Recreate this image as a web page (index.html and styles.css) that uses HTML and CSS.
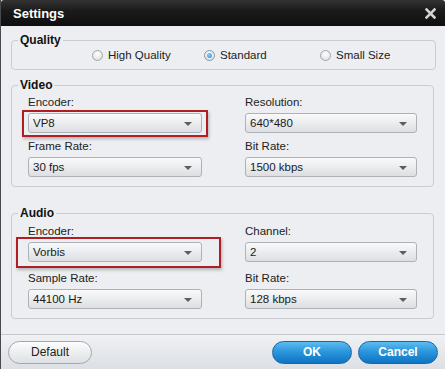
FILE: index.html
```
<!DOCTYPE html>
<html lang="en">
<head>
    <meta charset="UTF-8">
    <meta name="viewport" content="width=device-width, initial-scale=1.0">
    <title>Settings</title>
    <link rel="stylesheet" href="styles.css">
</head>
<body>

<div class="window">
    <div class="titlebar">
        <span class="title">Settings</span>
        <button class="close" aria-label="Close">
            <svg width="11" height="11" viewBox="0 0 11 11">
                <path d="M1.5 1.5 L9.5 9.5 M9.5 1.5 L1.5 9.5" stroke="#d2d2d2" stroke-width="2.6" stroke-linecap="square"/>
            </svg>
        </button>
    </div>

    <div class="content">
        <fieldset class="group quality">
            <legend>Quality</legend>
            <div class="radios">
                <label class="radio"><span class="dot"></span>High Quality</label>
                <label class="radio checked"><span class="dot"></span>Standard</label>
                <label class="radio"><span class="dot"></span>Small Size</label>
            </div>
        </fieldset>

        <fieldset class="group video">
            <legend>Video</legend>
            <div class="fields">
                <div class="field">
                    <div class="label">Encoder:</div>
                    <div class="select-wrap">
                        <div class="select">VP8</div>
                        <div class="highlight hl-video"></div>
                    </div>
                </div>
                <div class="field">
                    <div class="label">Resolution:</div>
                    <div class="select">640*480</div>
                </div>
                <div class="field">
                    <div class="label">Frame Rate:</div>
                    <div class="select">30 fps</div>
                </div>
                <div class="field">
                    <div class="label">Bit Rate:</div>
                    <div class="select">1500 kbps</div>
                </div>
            </div>
        </fieldset>

        <fieldset class="group audio">
            <legend>Audio</legend>
            <div class="fields">
                <div class="field">
                    <div class="label">Encoder:</div>
                    <div class="select-wrap">
                        <div class="select">Vorbis</div>
                        <div class="highlight hl-audio"></div>
                    </div>
                </div>
                <div class="field">
                    <div class="label">Channel:</div>
                    <div class="select">2</div>
                </div>
                <div class="field">
                    <div class="label">Sample Rate:</div>
                    <div class="select">44100 Hz</div>
                </div>
                <div class="field">
                    <div class="label">Bit Rate:</div>
                    <div class="select">128 kbps</div>
                </div>
            </div>
        </fieldset>
    </div>

    <div class="footer">
        <button class="btn btn-default">Default</button>
        <div class="spacer"></div>
        <button class="btn btn-blue">OK</button>
        <button class="btn btn-blue">Cancel</button>
    </div>
</div>

</body>
</html>
```

FILE: styles.css
```
body {
    margin: 0;
    padding: 0;
    font-family: "Liberation Sans", Arial, sans-serif;
    font-size: 11px;
    color: #1e1e1e;
}

.window {
    width: 445px;
    height: 369px;
    display: flex;
    flex-direction: column;
    background-color: #eceef1;
    border-left: 1px solid #4a4a4a;
    box-sizing: border-box;
    overflow: hidden;
}

.titlebar {
    height: 26px;
    flex: none;
    display: flex;
    align-items: center;
    justify-content: space-between;
    padding: 0 9px 0 12px;
    background: linear-gradient(#333333, #1b1b1b 40%, #0f0f0f);
    border-radius: 3px 3px 0 0;
}

.title {
    color: #fff;
    font-weight: bold;
    font-size: 13px;
    padding-top: 1px;
}

.close {
    background: none;
    border: none;
    padding: 0;
    width: 11px;
    height: 11px;
    display: flex;
}

.content {
    flex: 1;
    padding-top: 7px;
}

/* group boxes */
.group {
    margin: 0 11px 0 10px;
    padding: 0;
    border: 1px solid #c9ccd1;
    border-radius: 4px;
    min-width: 0;
}

.group legend {
    margin-left: 6px;
    padding: 0 2px;
    font-size: 12px;
    font-weight: bold;
    line-height: 14px;
    color: #111;
}

.quality {
    margin-right: 9px;
    padding: 0 0 6px;
}

.video legend,
.audio legend {
    margin-left: -10px;
}

.video {
    margin-top: 8px;
    padding: 4px 16px 9px;
}

.audio {
    margin-top: 19px;
    padding: 5px 16px 9px;
}

.audio .fields {
    row-gap: 10px;
}

/* radios */
.radios {
    display: flex;
    height: 16px;
    align-items: center;
    padding-left: 80px;
}

.radio {
    display: flex;
    align-items: center;
    gap: 5px;
    font-size: 11.5px;
    color: #222;
}

.radio:nth-child(1) { width: 112px; }
.radio:nth-child(2) { width: 116px; }

.dot {
    width: 11px;
    height: 11px;
    border-radius: 50%;
    border: 1px solid #a3a5a8;
    background: radial-gradient(circle at 50% 35%, #ffffff, #e4e5e7 70%, #d2d3d6);
    box-sizing: border-box;
    position: relative;
}

.checked .dot {
    border-color: #7e97b2;
}

.checked .dot::after {
    content: "";
    position: absolute;
    left: 2px;
    top: 2px;
    width: 5px;
    height: 5px;
    border-radius: 50%;
    background: radial-gradient(circle at 40% 35%, #8cd0ff, #2a86d6);
}

/* fields */
.fields {
    display: grid;
    grid-template-columns: 174px 172px;
    column-gap: 43px;
    row-gap: 7px;
}

.label {
    line-height: 13px;
    margin-bottom: 4px;
    font-size: 11.5px;
    color: #222;
}

.select-wrap {
    position: relative;
}

.select {
    height: 20px;
    line-height: 18px;
    padding-left: 4px;
    border: 1px solid #aeb2b8;
    border-radius: 3px;
    background: linear-gradient(#f9f9fa, #eceef0 45%, #dcdee2);
    box-sizing: border-box;
    position: relative;
    font-size: 11.5px;
    color: #1a1a1a;
}

.select::after {
    content: "";
    position: absolute;
    right: 9px;
    top: 8px;
    border-left: 4px solid transparent;
    border-right: 4px solid transparent;
    border-top: 4px solid #5b5e63;
}

/* red annotation boxes */
.highlight {
    position: absolute;
    border: 2px solid #b01e24;
    box-shadow: 1px 2px 3px rgba(0, 0, 0, 0.25);
    pointer-events: none;
}

.hl-video {
    left: -6px;
    right: -6px;
    top: -3px;
    bottom: -4px;
}

.hl-audio {
    left: -12px;
    right: -19px;
    top: -5px;
    bottom: -6px;
}

/* footer */
.footer {
    flex: none;
    height: 35px;
    display: flex;
    align-items: center;
    gap: 6px;
    padding: 0 7px;
    border-top: 1px solid #c4c7cc;
    background: linear-gradient(#eff1f4, #dcdfe4);
    box-sizing: border-box;
}

.spacer {
    flex: 1;
}

.btn {
    height: 23px;
    border-radius: 12px;
    font-family: "Liberation Sans", Arial, sans-serif;
    font-size: 12px;
    cursor: pointer;
    padding: 0;
}

.btn-default {
    width: 84px;
    border: 1px solid #a4a8ae;
    background: linear-gradient(#fdfdfd, #eceef0 50%, #dde0e4);
    color: #222;
}

.btn-blue {
    width: 80px;
    border: 1px solid #1b66a3;
    background: linear-gradient(#5cbcf0, #2b97dc 45%, #0f73c4);
    color: #fff;
    font-weight: bold;
}
```
